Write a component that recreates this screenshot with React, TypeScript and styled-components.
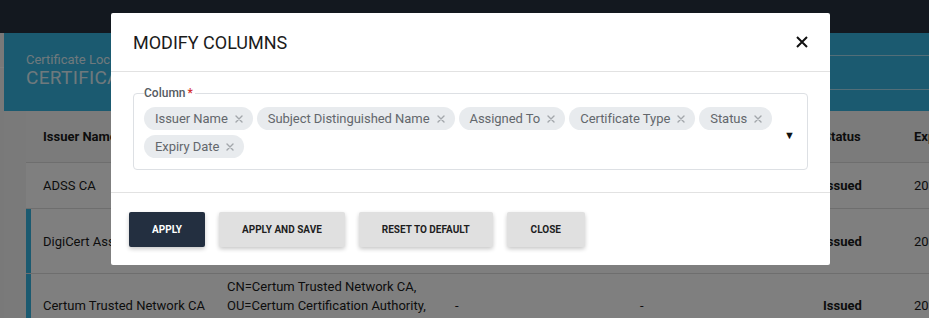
import { createGlobalStyle, styled } from "styled-components";

const GlobalStyle = createGlobalStyle`
  html, body {
    margin: 0;
    padding: 0;
    font-family: Roboto, "Liberation Sans", Arial, sans-serif;
    background: #f4f4f4;
  }
`;

const Page = styled.div`
  position: relative;
  width: 929px;
  height: 318px;
  overflow: hidden;
  background: #f4f4f4;
`;

const TopNav = styled.div`
  height: 33px;
  background: #26303e;
`;

const Main = styled.div`
  display: flex;
  height: 285px;
`;

const SideStrip = styled.div`
  width: 4px;
  flex: none;
  background: #f2f2f2;
  padding-top: 34px;
  div {
    height: 1px;
    background: #ffffff;
  }
`;

const Content = styled.div`
  flex: 1;
  display: flex;
  flex-direction: column;
  min-width: 0;
`;

const Banner = styled.div`
  height: 78px;
  flex: none;
  background: #36b4e0;
  display: flex;
  justify-content: space-between;
  padding-left: 22px;
  color: rgba(255, 255, 255, 0.85);
`;

const BannerTitle = styled.div`
  padding-top: 19px;
  small {
    display: block;
    font-size: 13px;
    line-height: 16px;
  }
  h1 {
    margin: 0;
    font-size: 19px;
    line-height: 20px;
    font-weight: 400;
    letter-spacing: 0.3px;
  }
`;

const BannerLines = styled.div`
  width: 240px;
  height: 33px;
  margin-top: 22px;
  border-top: 1px solid rgba(255, 255, 255, 0.55);
  border-bottom: 1px solid rgba(255, 255, 255, 0.55);
`;

const Card = styled.div`
  margin-left: 22px;
  background: #ffffff;
  overflow: hidden;
  flex: 1;
`;

const Table = styled.table`
  width: 1000px;
  border-collapse: collapse;
  table-layout: fixed;
  font-size: 13px;
  color: #1a1a1a;
`;

const HeadCell = styled.th`
  text-align: left;
  font-weight: 700;
  padding: 0 0 0 17px;
  height: 51px;
  background: #f7f7f7;
  border-bottom: 1px solid #dcdcdc;
`;

const Row = styled.tr<{ $marked?: boolean; $h: number }>`
  height: ${(p) => p.$h}px;
  border-bottom: 1px solid #dcdcdc;
  td:first-child {
    box-shadow: ${(p) => (p.$marked ? "inset 5px 0 0 #36b4e0" : "none")};
  }
`;

const Cell = styled.td<{ $bold?: boolean }>`
  padding: 0 0 0 17px;
  vertical-align: middle;
  font-weight: ${(p) => (p.$bold ? 700 : 400)};
  line-height: 19px;
  white-space: nowrap;
  overflow: hidden;
`;

const Overlay = styled.div`
  position: absolute;
  inset: 0;
  background: rgba(0, 0, 0, 0.5);
`;

const Modal = styled.div`
  position: absolute;
  left: 111px;
  top: 13px;
  width: 719px;
  height: 252px;
  background: #ffffff;
  border-radius: 2px;
  display: flex;
  flex-direction: column;
`;

const ModalHeader = styled.div`
  height: 58px;
  flex: none;
  display: flex;
  align-items: center;
  justify-content: space-between;
  padding: 0 22px 0 22px;
  border-bottom: 1px solid #e2e2e2;
  h2 {
    margin: 0;
    font-size: 18px;
    font-weight: 400;
    color: #1b1b1b;
  }
`;

const CloseIcon = styled.button`
  border: none;
  background: none;
  padding: 0;
  width: 12px;
  height: 12px;
  display: flex;
  cursor: pointer;
`;

const ModalBody = styled.div`
  flex: none;
  padding: 14px 22px 22px 22px;
  border-bottom: 1px solid #e2e2e2;
`;

const Fieldset = styled.fieldset`
  margin: 0;
  border: 1px solid #dde0e4;
  border-radius: 4px;
  padding: 7px 10px 11px 10px;
  display: flex;
  align-items: center;
  gap: 6px;
`;

const Legend = styled.legend`
  padding: 0 2px 0 0;
  margin-left: 0;
  font-size: 12px;
  line-height: 14px;
  font-weight: 500;
  color: #555b62;
  span {
    color: #d32f2f;
    margin-left: 2px;
  }
`;

const Chips = styled.div`
  flex: 1;
  display: flex;
  flex-wrap: wrap;
  gap: 5px 4px;
`;

const Chip = styled.span`
  display: inline-flex;
  align-items: center;
  height: 23px;
  padding: 0 10px 0 11px;
  border-radius: 12px;
  background: #e8ebee;
  color: #63676c;
  font-size: 13px;
  letter-spacing: -0.05px;
  gap: 7px;
`;

const Arrow = styled.span`
  font-size: 11px;
  color: #111;
  margin-top: 6px;
  margin-right: 2px;
`;

const Footer = styled.div`
  flex: 1;
  display: flex;
  align-items: center;
  padding: 0 18px;
  gap: 14px;
`;

const Button = styled.button<{ $primary?: boolean }>`
  height: 35px;
  min-width: 76px;
  padding: 0 23px;
  border: none;
  border-radius: 2px;
  font-family: Roboto, "Liberation Sans", Arial, sans-serif;
  font-size: 10px;
  font-weight: 700;
  color: ${(p) => (p.$primary ? "#ffffff" : "#1e1e1e")};
  background: ${(p) => (p.$primary ? "#232f40" : "#e0e0e0")};
  box-shadow: 0 2px 4px rgba(0, 0, 0, 0.22);
  cursor: pointer;
  &:last-child {
    min-width: 78px;
  }
`;

const XSmall = () => (
  <svg width="8" height="8" viewBox="0 0 8 8">
    <path d="M1 1L7 7M7 1L1 7" stroke="#a3a7ab" strokeWidth="1.4" strokeLinecap="round" />
  </svg>
);

const columns = [
  "Issuer Name",
  "Subject Distinguished Name",
  "Assigned To",
  "Certificate Type",
  "Status",
  "Expiry Date",
];

const widths = [184, 228, 185, 183, 91, 129];

export default function App() {
  return (
    <Page>
      <GlobalStyle />
      <TopNav />
      <Main>
        <SideStrip>
          <div />
        </SideStrip>
        <Content>
          <Banner>
            <BannerTitle>
              <small>Certificate Locator</small>
              <h1>CERTIFICATES</h1>
            </BannerTitle>
            <BannerLines />
          </Banner>
          <Card>
            <Table>
              <colgroup>
                {widths.map((w, i) => (
                  <col key={i} style={{ width: w }} />
                ))}
              </colgroup>
              <thead>
                <tr>
                  <HeadCell>Issuer Name</HeadCell>
                  <HeadCell>Subject Distinguished Name</HeadCell>
                  <HeadCell>Assigned To</HeadCell>
                  <HeadCell>Certificate Type</HeadCell>
                  <HeadCell>Status</HeadCell>
                  <HeadCell>Expiry Date</HeadCell>
                </tr>
              </thead>
              <tbody>
                <Row $h={46}>
                  <Cell>ADSS CA</Cell>
                  <Cell>CN=ADSS CA</Cell>
                  <Cell>-</Cell>
                  <Cell>-</Cell>
                  <Cell $bold>Issued</Cell>
                  <Cell>2030-01-01</Cell>
                </Row>
                <Row $h={65} $marked>
                  <Cell>DigiCert Assured ID Root CA</Cell>
                  <Cell>
                    CN=DigiCert Assured ID Root CA,
                    <br />
                    OU=www.digicert.com,
                  </Cell>
                  <Cell>-</Cell>
                  <Cell>-</Cell>
                  <Cell $bold>Issued</Cell>
                  <Cell>2031-11-10</Cell>
                </Row>
                <Row $h={64} $marked>
                  <Cell>Certum Trusted Network CA</Cell>
                  <Cell>
                    CN=Certum Trusted Network CA,
                    <br />
                    OU=Certum Certification Authority,
                    <br />
                    O=Unizeto Technologies S.A., C=PL
                  </Cell>
                  <Cell>-</Cell>
                  <Cell>-</Cell>
                  <Cell $bold>Issued</Cell>
                  <Cell>2029-12-31</Cell>
                </Row>
              </tbody>
            </Table>
          </Card>
        </Content>
      </Main>
      <Overlay />
      <Modal>
        <ModalHeader>
          <h2>MODIFY COLUMNS</h2>
          <CloseIcon aria-label="close">
            <svg width="12" height="12" viewBox="0 0 12 12">
              <path d="M1 1L11 11M11 1L1 11" stroke="#111" strokeWidth="2" />
            </svg>
          </CloseIcon>
        </ModalHeader>
        <ModalBody>
          <Fieldset>
            <Legend>
              Column<span>*</span>
            </Legend>
            <Chips>
              {columns.map((c) => (
                <Chip key={c}>
                  {c}
                  <XSmall />
                </Chip>
              ))}
            </Chips>
            <Arrow>▼</Arrow>
          </Fieldset>
        </ModalBody>
        <Footer>
          <Button $primary>APPLY</Button>
          <Button>APPLY AND SAVE</Button>
          <Button>RESET TO DEFAULT</Button>
          <Button>CLOSE</Button>
        </Footer>
      </Modal>
    </Page>
  );
}
